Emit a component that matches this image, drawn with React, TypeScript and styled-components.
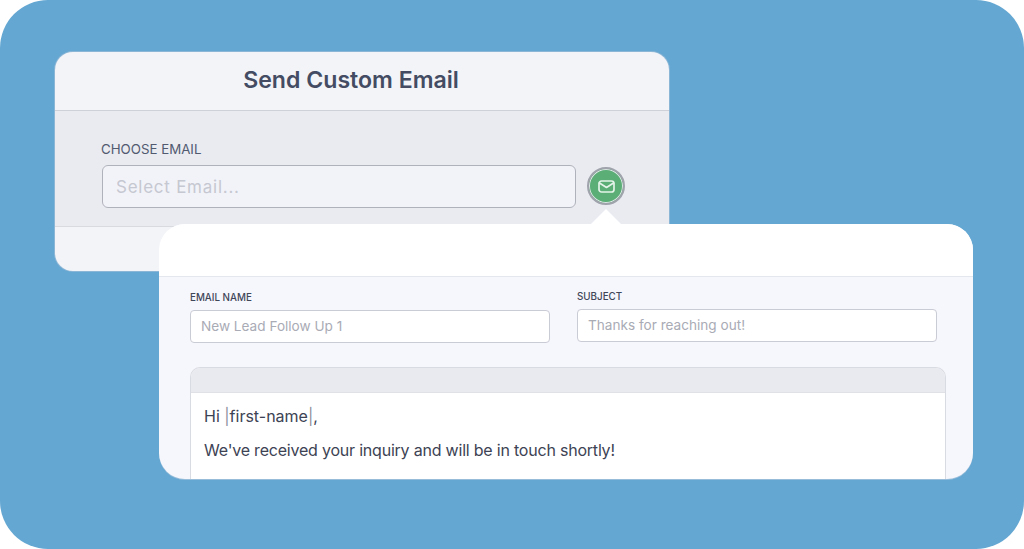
import React from 'react';
import styled, {createGlobalStyle} from 'styled-components';

const GlobalStyle = createGlobalStyle`
  html, body {
    margin: 0;
    padding: 0;
    background: #ffffff;
    font-family: "Inter", "Liberation Sans", sans-serif;
  }
`;

const App: React.FC = () => {
    return (
        <Stage>
            <GlobalStyle />
            <BackCard>
                <BackHeader>Send Custom Email</BackHeader>
                <BackBody>
                    <BackLabel>CHOOSE EMAIL</BackLabel>
                    <SelectRow>
                        <SelectBox>Select Email...</SelectBox>
                        <MailButton>
                            <svg width="17" height="13" viewBox="0 0 17 13" fill="none" stroke="#e3f3e8" strokeWidth="1.7" strokeLinejoin="round" strokeLinecap="round">
                                <rect x="1" y="1" width="15" height="11" rx="2.5" />
                                <path d="M1.5 3 8.5 7.5 15.500 3" />
                            </svg>
                        </MailButton>
                    </SelectRow>
                </BackBody>
                <BackFooter />
            </BackCard>
            <FrontCard>
                <Caret />
                <FrontHeader />
                <FrontBody>
                    <Fields>
                        <Field $offset={1}>
                            <FieldLabel>EMAIL NAME</FieldLabel>
                            <FieldInput>New Lead Follow Up 1</FieldInput>
                        </Field>
                        <Field $offset={0}>
                            <FieldLabel>SUBJECT</FieldLabel>
                            <FieldInput>Thanks for reaching out!</FieldInput>
                        </Field>
                    </Fields>
                    <Editor>
                        <EditorToolbar />
                        <EditorBody>
                            <EditorLine>Hi <Pipe>|</Pipe>first-name<Pipe>|</Pipe>,</EditorLine>
                            <EditorLine $tight>We've received your inquiry and will be in touch shortly!</EditorLine>
                        </EditorBody>
                    </Editor>
                </FrontBody>
            </FrontCard>
        </Stage>
    );
};

export default App;

const Stage = styled.div`
  position: relative;
  width: 1024px;
  height: 549px;
  box-sizing: border-box;
  padding: 52px 0 0 55px;
  background: #64a7d2;
  border-radius: 48px;
  overflow: hidden;
`;

const BackCard = styled.div`
  width: 614px;
  height: 219px;
  display: flex;
  flex-direction: column;
  border-radius: 18px;
  overflow: hidden;
  background: #f3f4f8;
  box-shadow: 0 0 0 1px rgba(200, 205, 220, 0.4);
`;

const BackHeader = styled.div`
  height: 59px;
  flex-shrink: 0;
  box-sizing: border-box;
  padding: 0 22px 3px 0;
  display: flex;
  align-items: center;
  justify-content: center;
  font-size: 23.1px;
  font-weight: 600;
  color: #434c63;
  border-bottom: 1px solid #cfd1d8;
`;

const BackBody = styled.div`
  height: 116px;
  flex-shrink: 0;
  box-sizing: border-box;
  padding: 31px 0 0 47px;
  background: #e9ebf0;
  border-bottom: 1px solid #d8dae0;
`;

const BackLabel = styled.div`
  font-size: 13.3px;
  line-height: 15px;
  color: #525a70;
  margin: 0 0 8px -1px;
`;

const SelectRow = styled.div`
  display: flex;
  align-items: flex-start;
  gap: 11px;
`;

const SelectBox = styled.div`
  width: 474px;
  height: 43px;
  box-sizing: border-box;
  padding-left: 13px;
  display: flex;
  align-items: center;
  font-size: 17px;
  letter-spacing: 0.75px;
  color: #c6c8d1;
  background: #f2f3f9;
  border: 1px solid #b0b2bb;
  border-radius: 6px;
`;

const MailButton = styled.div`
  width: 38px;
  height: 38px;
  margin-top: 2px;
  box-sizing: border-box;
  display: flex;
  align-items: center;
  justify-content: center;
  border-radius: 50%;
  background: #5aae76;
  border: 2px solid #a0a3ac;
  box-shadow: inset 0 0 0 1px #dfe6e6;
`;

const BackFooter = styled.div`
  flex: 1;
`;

const FrontCard = styled.div`
  position: absolute;
  left: 159px;
  top: 224px;
  width: 814px;
  height: 255px;
  display: flex;
  flex-direction: column;
  border-radius: 26px;
  background: #f6f7fc;
  box-shadow: 0 1px 0 0 rgba(200, 210, 225, 0.5);
`;

const Caret = styled.div`
  position: absolute;
  left: 431px;
  top: -15px;
  width: 32px;
  height: 16px;
  background: #ffffff;
  clip-path: polygon(50% 0, 100% 100%, 0 100%);
`;

const FrontHeader = styled.div`
  height: 53px;
  flex-shrink: 0;
  box-sizing: border-box;
  background: #ffffff;
  border-radius: 26px 26px 0 0;
  border-bottom: 1px solid #e4e7ee;
`;

const FrontBody = styled.div`
  flex: 1;
  min-height: 0;
  box-sizing: border-box;
  padding: 0 27px 0 31px;
  display: flex;
  flex-direction: column;
`;

const Fields = styled.div`
  display: flex;
  gap: 27px;
  padding-top: 13px;
  height: 77px;
  box-sizing: content-box;
`;

const Field = styled.div<{$offset: number}>`
  width: 360px;
  padding-top: ${p => p.$offset}px;
`;

const FieldLabel = styled.div`
  font-size: 9.8px;
  line-height: 13px;
  font-weight: 500;
  color: #3f4658;
  margin-bottom: 6px;
`;

const FieldInput = styled.div`
  height: 33px;
  box-sizing: border-box;
  padding: 0 0 2px 10px;
  display: flex;
  align-items: center;
  font-size: 13.6px;
  color: #a9abb5;
  background: #ffffff;
  border: 1px solid #c9cbd5;
  border-radius: 4px;
`;

const Editor = styled.div`
  flex: 1;
  min-height: 0;
  display: flex;
  flex-direction: column;
  border: 1px solid #d9dbe2;
  border-bottom: none;
  border-radius: 10px 10px 0 0;
  overflow: hidden;
`;

const EditorToolbar = styled.div`
  height: 24px;
  flex-shrink: 0;
  background: #e9eaef;
  border-bottom: 1px solid #dfe1e7;
`;

const EditorBody = styled.div`
  flex: 1;
  box-sizing: border-box;
  padding: 12px 13px 0;
  background: #ffffff;
`;

const EditorLine = styled.div<{$tight?: boolean}>`
  font-size: 16px;
  line-height: 22px;
  letter-spacing: ${p => (p.$tight ? '-0.21px' : '0')};
  color: #3d4354;
  margin-bottom: 12px;
`;

const Pipe = styled.span`
  color: #8d919e;
`;
